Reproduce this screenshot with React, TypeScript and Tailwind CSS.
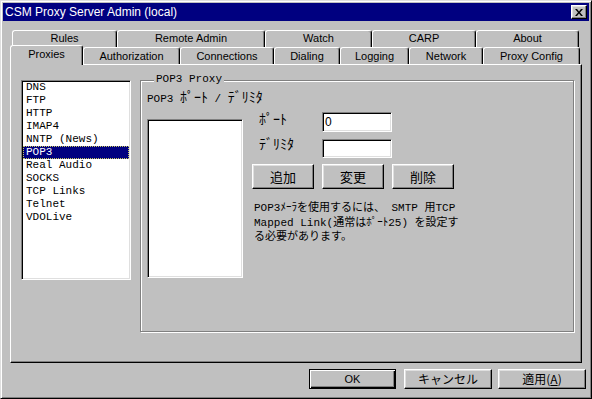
import React from "react";

const raised =
  "border border-t-white border-l-white border-r-black border-b-black shadow-[inset_-1px_-1px_#808080,inset_1px_1px_#dfdfdf] bg-[#c0c0c0]";
const sunken =
  "border border-t-[#808080] border-l-[#808080] border-r-white border-b-white shadow-[inset_1px_1px_#000,inset_-1px_-1px_#dfdfdf] bg-white";
const mono = "font-['Liberation_Mono','Noto_Sans_CJK_JP',monospace] text-[11px]";
const jp = "font-['Noto_Sans_CJK_JP',sans-serif]";

function K({ children }: { children: React.ReactNode }) {
  return <span className="font-['Noto_Sans_CJK_JP',sans-serif] text-[14px] leading-[0]">{children}</span>;
}

const row1 = [
  { t: "Rules", w: 105 },
  { t: "Remote Admin", w: 148 },
  { t: "Watch", w: 107 },
  { t: "CARP", w: 104 },
  { t: "About", w: 103 },
];
const row2 = [
  { t: "Proxies", w: 73 },
  { t: "Authorization", w: 97 },
  { t: "Connections", w: 94 },
  { t: "Dialing", w: 66 },
  { t: "Logging", w: 69 },
  { t: "Network", w: 74 },
  { t: "Proxy Config", w: 97 },
];

const items = [
  "DNS",
  "FTP",
  "HTTP",
  "IMAP4",
  "NNTP (News)",
  "POP3",
  "Real Audio",
  "SOCKS",
  "TCP Links",
  "Telnet",
  "VDOLive",
];

const tabBase =
  "flex items-center justify-center bg-[#c0c0c0] border-t border-l border-r border-t-white border-l-white border-r-black rounded-t-[3px] shadow-[inset_-1px_0_#808080] text-[11px] text-black";

export default function App() {
  return (
    <div className="w-[592px] h-[399px] bg-[#c0c0c0] border border-t-[#dfdfdf] border-l-[#dfdfdf] border-r-black border-b-black shadow-[inset_1px_1px_#fff,inset_-1px_-1px_#808080] p-[2px] flex flex-col font-['Liberation_Sans','Noto_Sans_CJK_JP',sans-serif] text-black overflow-hidden">
      {/* Title bar */}
      <div className="h-[18px] bg-[#000080] flex items-center justify-between pl-[2px] pr-[2px] shrink-0">
        <span className="text-white text-[12px] leading-none">CSM Proxy Server Admin (local)</span>
        <div className={`${raised} w-[16px] h-[14px] flex items-center justify-center`}>
          <svg width="8" height="7" viewBox="0 0 8 7">
            <path d="M0 0H2L4 2.4L6 0H8L5 3.5L8 7H6L4 4.6L2 7H0L3 3.5Z" fill="#000" />
          </svg>
        </div>
      </div>

      {/* Tabs */}
      <div className="mt-[9px] ml-[7px] flex flex-col shrink-0">
        <div className="flex h-[17px] ml-[2px]">
          {row1.map((t) => (
            <div key={t.t} className={`${tabBase} h-[17px] pb-[1px]`} style={{ width: t.w }}>
              {t.t}
            </div>
          ))}
        </div>
        <div className="flex h-[17px] items-end">
          {row2.map((t, i) =>
            i === 0 ? (
              <div
                key={t.t}
                className={`${tabBase} h-[20px] -mb-[1px] relative z-10 pb-[3px]`}
                style={{ width: t.w }}
              >
                {t.t}
              </div>
            ) : (
              <div key={t.t} className={`${tabBase} h-[17px]`} style={{ width: t.w }}>
                {t.t}
              </div>
            )
          )}
        </div>
      </div>

      {/* Panel */}
      <div className="mx-[7px] h-[299px] shrink-0 border border-t-white border-l-white border-r-black border-b-black shadow-[inset_-1px_-1px_#808080] flex items-start pl-[10px] pt-[15px] gap-[9px]">
        {/* Proxy list */}
        <div className={`${sunken} w-[110px] h-[200px] ${mono} py-0 px-[1px]`}>
          {items.map((it) =>
            it === "POP3" ? (
              <div
                key={it}
                className="h-[13px] leading-[13px] pl-[3px] bg-[#000080] text-white outline-1 outline-dotted outline-[#c8c860] -outline-offset-1"
              >
                {it}
              </div>
            ) : (
              <div key={it} className="h-[13px] leading-[13px] pl-[3px] whitespace-pre">
                {it}
              </div>
            )
          )}
        </div>

        {/* Group box */}
        <div className="relative w-[434px] h-[252px] border border-[#808080] shadow-[inset_1px_1px_#fff,1px_1px_#fff] pl-[6px] pt-[12px]">
          <div className={`absolute -top-[8px] left-[13px] px-[2px] bg-[#c0c0c0] leading-[13px] ${mono}`}>
            POP3 Proxy
          </div>
          <div className={`h-[13px] leading-[13px] ${mono} whitespace-pre`}>
            POP3 <K>ﾎﾟｰﾄ</K> / <K>ﾃﾞﾘﾐﾀ</K>
          </div>
          <div className="flex mt-[6px]">
            <div className={`${sunken} w-[96px] h-[159px] mt-[7px]`} />
            <div className="ml-[9px] flex flex-col">
              <div className="flex items-center h-[20px]">
                <div className={`w-[70px] pl-[7px] pb-[2px] leading-[13px] ${mono}`}>
                  <K>ﾎﾟｰﾄ</K>
                </div>
                <div className={`${sunken} w-[70px] h-[20px] flex items-center pl-[2px] text-[12px]`}>0</div>
              </div>
              <div className="flex items-center h-[20px] mt-[6px]">
                <div className={`w-[70px] pl-[7px] pb-[4px] leading-[13px] ${mono}`}>
                  <K>ﾃﾞﾘﾐﾀ</K>
                </div>
                <div className={`${sunken} w-[70px] h-[19px]`} />
              </div>
              <div className="flex gap-[8px] mt-[6px]">
                {["追加", "変更", "削除"].map((b) => (
                  <div
                    key={b}
                    className={`${raised} w-[62px] h-[25px] flex items-center justify-center text-[13px] ${jp}`}
                  >
                    {b}
                  </div>
                ))}
              </div>
              <div className={`mt-[12px] ml-[2px] ${mono} whitespace-pre`}>
                <div className="h-[15px] leading-[15px]">POP3ﾒｰﾗを使用するには、 SMTP 用TCP</div>
                <div className="h-[14px] leading-[14px]">Mapped Link(通常はﾎﾟｰﾄ25) を設定す</div>
                <div className="h-[14px] leading-[14px]">る必要があります。</div>
              </div>
            </div>
          </div>
        </div>
      </div>

      {/* Bottom buttons */}
      <div className="flex justify-end mt-[6px] pr-[3px] shrink-0">
        <div className="w-[87px] h-[20px] border border-black bg-[#c0c0c0] shadow-[inset_1px_1px_#fff,inset_-1px_-1px_#000,inset_-2px_-2px_#808080] flex items-center justify-center text-[11px]">
          OK
        </div>
        <div className={`${raised} w-[88px] h-[20px] ml-[8px] flex items-center justify-center text-[12px] ${jp}`}>
          キャンセル
        </div>
        <div className={`${raised} w-[88px] h-[20px] ml-[6px] flex items-center justify-center text-[12px] ${jp}`}>
          適用(<span className="underline">A</span>)
        </div>
      </div>
    </div>
  );
}
